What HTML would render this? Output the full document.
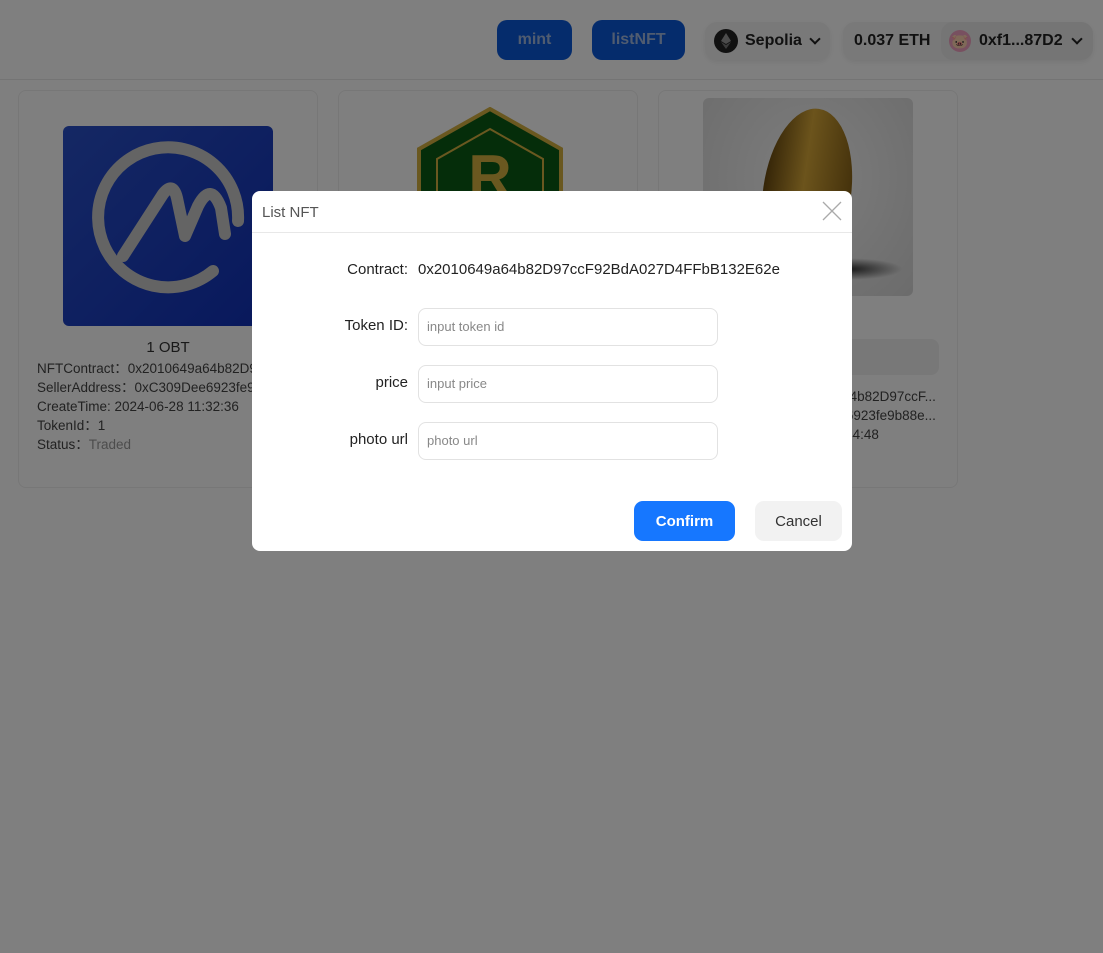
<!DOCTYPE html>
<html><head><meta charset="utf-8"><style>
*{box-sizing:border-box;margin:0;padding:0}
body{width:1103px;height:953px;overflow:hidden;background:#fff;font-family:"Liberation Sans",sans-serif;position:relative}
.hdr{position:absolute;left:0;top:0;width:1103px;height:80px;border-bottom:1px solid #e8e8e8;background:#fff}
.btn{position:absolute;top:20px;height:40px;border-radius:10px;background:#0a58d8;color:#a0b8e0;font-weight:bold;font-size:16px;display:flex;align-items:center;justify-content:center}
.pill{position:absolute;top:22px;height:38px;border-radius:12px;background:#f2f2f2;box-shadow:0 2px 6px rgba(0,0,0,.08);display:flex;align-items:center;font-weight:bold;font-size:16px;color:#222}
.card{position:absolute;top:90px;width:300px;height:398px;border:1px solid #eee;border-radius:8px;background:#fff;overflow:hidden}
.info{position:absolute;left:18px;font-size:13.5px;color:#444;line-height:19px;white-space:nowrap}
.info div{overflow:hidden;text-overflow:ellipsis;width:264px}
.ov{position:absolute;left:0;top:0;width:1103px;height:953px;background:rgba(0,0,0,.5)}
.modal{position:absolute;left:252px;top:191px;width:600px;height:360px;background:#fff;border-radius:8px}
.lab{position:absolute;right:444px;font-size:15px;color:#222;text-align:right}
.inp{position:absolute;left:166px;width:300px;height:38px;border:1px solid #e2e2e2;border-radius:8px;font-size:13px;color:#888;padding-left:8px;line-height:36px}
.chev{display:inline-block;width:8px;height:8px;border-right:2.5px solid #222;border-bottom:2.5px solid #222;transform:rotate(45deg);margin-top:-5px}
</style></head><body>
<div class="hdr">
<div class="btn" style="left:497px;width:75px">mint</div>
<div class="btn" style="left:592px;width:93px">listNFT</div>
<div class="pill" style="left:705px;width:125px"><svg style="margin-left:9px" width="24" height="24" viewBox="0 0 24 24"><circle cx="12" cy="12" r="12" fill="#222"/><path d="M12 4l-5 8 5 3 5-3z" fill="#999"/><path d="M12 16l-5-3 5 7 5-7z" fill="#777"/></svg><span style="margin-left:7px">Sepolia</span><span class="chev" style="margin-left:9px"></span></div>
<div class="pill" style="left:843px;width:250px"><span style="margin-left:11px">0.037 ETH</span><div style="position:absolute;left:98px;top:0;width:152px;height:38px;background:#eaeaea;border-radius:12px;display:flex;align-items:center"><div style="width:22px;height:22px;border-radius:50%;background:#f0a0c0;margin-left:8px;text-align:center;font-size:14px;line-height:22px">🐷</div><span style="margin-left:8px">0xf1...87D2</span><span class="chev" style="margin-left:10px"></span></div></div>
</div>
<div class="card" style="left:18px">
<div style="position:absolute;left:44px;top:35px;width:210px;height:200px;border-radius:6px;background:linear-gradient(135deg,#2a50c8,#1030b8)">
<svg width="210" height="200" viewBox="0 0 210 200"><path d="M150 145 A70 70 0 1 1 175 95" fill="none" stroke="#c8c8c8" stroke-width="12" stroke-linecap="round"/><path d="M60 130 L100 68 Q110 55 114 72 L122 110 L135 80 Q148 55 158 82 L162 108" fill="none" stroke="#c8c8c8" stroke-width="12" stroke-linejoin="round" stroke-linecap="round"/></svg></div>
<div style="position:absolute;top:248px;width:100%;text-align:center;font-size:15px;color:#333">1 OBT</div>
<div class="info" style="top:268px"><div>NFTContract：0x2010649a64b82D97ccF...</div><div>SellerAddress：0xC309Dee6923fe9b88e...</div><div>CreateTime: 2024-06-28 11:32:36</div><div>TokenId：1</div><div>Status：<span style="color:#999">Traded</span></div></div>
</div>
<div class="card" style="left:338px">
<svg style="position:absolute;left:76px;top:16px" width="150" height="90" viewBox="0 0 150 90"><path d="M75 2 L146 42 L146 90 L4 90 L4 42 Z" fill="#0a5a14" stroke="#d4b040" stroke-width="4"/><path d="M75 22 L128 52 L128 90 L22 90 L22 52Z" fill="none" stroke="#d4b040" stroke-width="2"/><text x="75" y="90" text-anchor="middle" font-size="60" font-weight="bold" fill="#d4b040" font-family="Liberation Sans">R</text></svg>
</div>
<div class="card" style="left:658px">
<div style="position:absolute;left:44px;top:7px;width:210px;height:198px;border-radius:6px;background:radial-gradient(ellipse at 50% 40%,#fafafa,#d8d8d8);overflow:hidden">
<div style="position:absolute;left:90px;top:160px;width:110px;height:22px;border-radius:50%;background:radial-gradient(#333,transparent 70%)"></div>
<div style="position:absolute;left:60px;top:10px;width:88px;height:170px;border-radius:50%;background:linear-gradient(90deg,#6a4a10,#d8a838 45%,#8a6418);transform:rotate(8deg)"></div></div>
<div style="position:absolute;left:20px;top:248px;width:260px;height:36px;border-radius:8px;background:#f0f0f0"></div>
<div class="info" style="top:296px"><div>NFTContract：0x2010649a64b82D97ccF...</div><div>SellerAddress：0xC309Dee6923fe9b88e...</div><div>CreateTime: 2024-06-28 11:44:48</div></div>
</div>
<div class="ov"></div>
<div class="modal">
<div style="height:42px;border-bottom:1px solid #e8e8e8;font-size:15px;color:#555;padding:13px 0 0 10px">List NFT</div>
<svg style="position:absolute;left:570px;top:10px" width="20" height="20"><path d="M1 1L19 19M19 1L1 19" stroke="#aaa" stroke-width="1.3"/></svg>
<div class="lab" style="top:70px">Contract:</div>
<div style="position:absolute;left:166px;top:70px;font-size:15px;color:#222">0x2010649a64b82D97ccF92BdA027D4FFbB132E62e</div>
<div class="lab" style="top:126px">Token ID:</div><div class="inp" style="top:117px">input token id</div>
<div class="lab" style="top:183px">price</div><div class="inp" style="top:174px">input price</div>
<div class="lab" style="top:240px">photo url</div><div class="inp" style="top:231px">photo url</div>
<div style="position:absolute;left:382px;top:310px;width:101px;height:40px;border-radius:9px;background:#1677ff;color:#fff;font-weight:bold;font-size:15px;text-align:center;line-height:42px">Confirm</div>
<div style="position:absolute;left:503px;top:310px;width:87px;height:40px;border-radius:9px;background:#f2f2f2;color:#333;font-size:15px;text-align:center;line-height:42px">Cancel</div>
</div>
</body></html>
